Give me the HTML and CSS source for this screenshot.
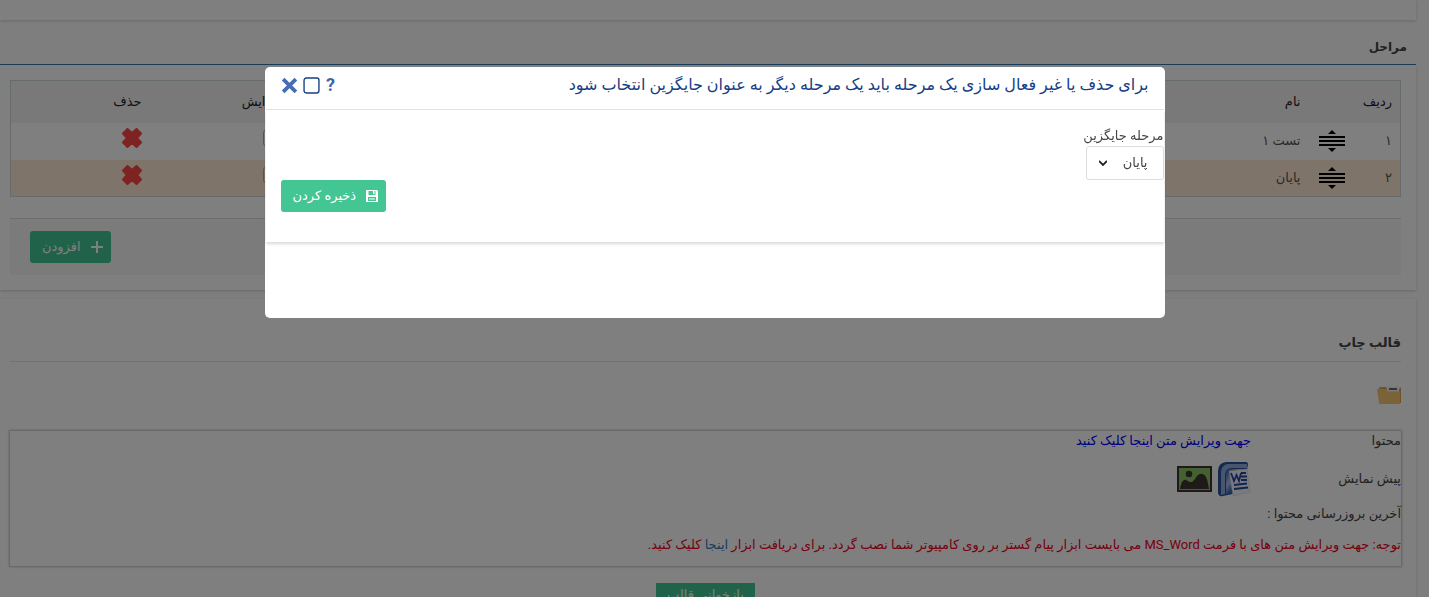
FILE: index.html
```html
<!DOCTYPE html>
<html lang="fa" dir="rtl">
<head>
<meta charset="utf-8">
<title>مراحل</title>
<link rel="stylesheet" href="styles.css">
</head>
<body>
<svg class="sprite" aria-hidden="true">
  <symbol id="drag" viewBox="0 0 26 24"><path d="M13 1l4 4H9zM13 23l4-4H9zM0 7h26v2H0zM0 11h26v2H0zM0 15h26v2H0z"/></symbol>
  <symbol id="remove" viewBox="0 0 20 20"><path d="M5.500 1 10 5 14.500 1 19 5.500 15 10 19 14.500 14.500 19 10 15 5.500 19 1 14.500 5 10 1 5.500z" stroke="#ff4545" stroke-width="2" stroke-linejoin="round"/></symbol>
  <symbol id="edit" viewBox="0 0 20 20"><path d="M13 2.500H2.500a2 2 0 0 0-2 2v11a2 2 0 0 0 2 2h11a2 2 0 0 0 2-2V10M7 12l1-4 8-7 3 3-8 7z" fill="none" stroke="#aaa"/></symbol>
</svg>
<main class="page">
  <section class="card card-top"></section>
  <h2 class="section-title">مراحل</h2>
  <section class="card stages">
    <table class="grid">
      <colgroup><col class="c-num"><col class="c-drag"><col><col class="c-edit"><col class="c-remove"></colgroup>
      <thead><tr><th>ردیف</th><th></th><th>نام</th><th>ویرایش</th><th>حذف</th></tr></thead>
      <tbody>
        <tr><td>۱</td><td><svg class="drag"><use href="#drag"/></svg></td><td>تست ۱</td>
          <td><button class="icon-btn" aria-label="ویرایش"><svg><use href="#edit"/></svg></button></td>
          <td><button class="icon-btn remove" aria-label="حذف"><svg><use href="#remove"/></svg></button></td></tr>
        <tr class="alt"><td>۲</td><td><svg class="drag"><use href="#drag"/></svg></td><td>پایان</td>
          <td><button class="icon-btn" aria-label="ویرایش"><svg><use href="#edit"/></svg></button></td>
          <td><button class="icon-btn remove" aria-label="حذف"><svg><use href="#remove"/></svg></button></td></tr>
      </tbody>
    </table>
    <div class="actions">
      <button class="btn"><svg class="plus" viewBox="0 0 12 12"><path d="M6 0v12M0 6h12" stroke="currentColor" stroke-width="2"/></svg>افزودن</button>
    </div>
  </section>
  <section class="card template">
    <h2 class="card-title">قالب چاپ</h2>
    <button class="folder" aria-label="پوشه"><svg viewBox="0 0 24 18"><path d="M2 2 3 1h6l1 2h12l2-2v16H3z" fill="#e8a04c"/><path d="M10 0h12v6H10z" fill="#f4f4f6"/><path d="M12 2h8v2h-8z" fill="#667"/><path d="M0 3h9l2 2.500h12V17a1 1 0 0 1-1 1H3a1 1 0 0 1-1-1z" fill="#f5c672"/></svg></button>
    <div class="details">
      <div class="row row-first"><span class="label">محتوا</span><a class="edit-link" href="#">جهت ویرایش متن اینجا کلیک کنید</a></div>
      <div class="row row-preview"><span class="label">پیش نمایش</span>
        <span class="previews">
          <svg class="word" viewBox="0 0 34 36"><defs><linearGradient id="wg" x1="0" y1="0" x2="1" y2="1"><stop offset="0" stop-color="#2857a8"/><stop offset=".35" stop-color="#a9c2ea"/><stop offset=".55" stop-color="#3d68b5"/><stop offset="1" stop-color="#214b98"/></linearGradient></defs>
            <path d="M9 1h20q2 0 2 3l-6 27-19 4q-5 1-5-4V10q0-8 8-9z" fill="#2a529c"/><path d="M10 3h20v4H14q-6 1-6 7v19l-4 1V11q0-6 6-8z" fill="#8eaada"/><path d="M12 8h17v22l-20 3V13q0-4 3-5z" fill="url(#wg)"/>
            <path d="M12 10l18-2 3 23-17 4z" fill="#f3f5fb" stroke="#c9cedb" stroke-width=".5"/><path d="M14 12l3 8 2.500-6 2.500 6 2-8" fill="none" stroke="#2346a0" stroke-width="1.800"/><path d="M24 12h5M24 15.500h6M24 19h6M17 24l13-1.500M17 28l14-1.500" stroke="#2346a0" stroke-width="1.800"/></svg>
          <svg class="picture" viewBox="0 0 35 26"><path d="M0 0h35v26H0z" fill="#3c3430"/><path d="M2 2h31v22H2z" fill="#8ac265"/><path d="M3 23c1-6 3-10 6-9 4 2 5 4 9-1 3-6 8-7 11-2 2 4 2 8 3 12z" fill="#3c3430"/><circle cx="12" cy="8" r="3.300" fill="#3c3430"/></svg>
        </span></div>
      <div class="row row-date"><span>آخرین بروزرسانی محتوا :</span></div>
      <p class="row notice"><span>توجه: جهت ویرایش متن های با فرمت MS_Word می بایست ابزار پیام گستر بر روی کامپیوتر شما نصب گردد. برای دریافت ابزار <a href="#">اینجا</a> کلیک کنید.</span></p>
    </div>
    <button class="btn reload">بازخوانی قالب</button>
  </section>
</main>
<div class="overlay">
  <div class="modal" role="dialog" aria-labelledby="dlg-title">
    <header class="modal-head">
      <h1 id="dlg-title">برای حذف یا غیر فعال سازی یک مرحله باید یک مرحله دیگر به عنوان جایگزین انتخاب شود</h1>
      <div class="tools">
        <button class="tool help" aria-label="راهنما">?</button>
        <button class="tool" aria-label="بزرگ کردن"><svg viewBox="0 0 16 16"><rect x="1" y="1" width="14" height="14" rx="2" fill="none" stroke="currentColor" stroke-width="1.300"/></svg></button>
        <button class="tool close" aria-label="بستن"><svg viewBox="0 0 16 16"><path d="M2 2l12 12M14 2L2 14" stroke="currentColor" stroke-width="3.500"/></svg></button>
      </div>
    </header>
    <form class="modal-body">
      <label for="alt">مرحله جایگزین</label>
      <div class="select"><select id="alt"><option>پایان</option></select><svg viewBox="0 0 8 6"><path d="M0 1l4 4 4-4" fill="none" stroke="#222" stroke-width="1.800"/></svg></div>
      <div class="submit"><button type="button" class="btn save-btn"><svg class="save" viewBox="0 0 12 12"><path fill-rule="evenodd" fill="currentColor" d="M0 0h11l1 1v11H0zM2.500 1v4h7V1zM2 7v4h8V7z"/><path d="M7 1h1.500v3H7zM3 8.500h6v1H3z" fill="currentColor"/></svg>ذخیره کردن</button></div>
    </form>
  </div>
</div>
</body>
</html>
```

FILE: styles.css
```css
* { box-sizing: border-box; }
body { margin: 0; height: 100vh; overflow: hidden; background: #fdfdfd; color: #444; font: 13px/20px Roboto, "DejaVu Sans", sans-serif; }
button, select { font: inherit; color: inherit; margin: 0; padding: 0; border: 0; background: none; }
h1, h2, p { margin: 0; }
a { color: #337ab7; text-decoration: none; }
svg { display: block; }
.sprite { position: absolute; width: 0; height: 0; }
.page { height: calc(100vh - 1px); overflow: hidden; padding-right: 13px; }
.card { background: #fff; box-shadow: 0 1px 3px rgba(0, 0, 0, .18); }
.card-top { height: 20px; }
.section-title { margin-top: 17px; padding: 0 9px 7px; border-bottom: 1px solid #337ab7; font-size: 12px; line-height: 20px; }
.stages { padding: 15px 15px 15px 10px; }
.grid { width: 100%; table-layout: fixed; border-collapse: collapse; border: 1px solid #ccd6dd; }
.c-num { width: 48px; }
.c-drag { width: 44px; }
.c-edit { width: 141px; }
.c-remove { width: 139px; }
.grid th, .grid td { padding: 0 8px; text-align: right; font-weight: 400; }
.grid th { height: 42px; background: #f2f2f2; color: #222; }
.grid td { height: 37px; color: #555; }
.grid .alt { background: #ffe8d2; }
.drag { width: 26px; height: 24px; fill: #000; }
.icon-btn { display: block; margin-bottom: 6px; }
.icon-btn svg { width: 20px; height: 20px; }
.remove { fill: #ff4545; }
.actions { display: flex; justify-content: flex-end; margin-top: 21px; padding: 12px 20px; background: #f6f6f6; border-top: 1px solid #ddd; }
.btn { display: flex; align-items: center; height: 32px; padding: 0 8px 0 12px; gap: 10px; border-radius: 3px; background: #43c594; color: #fff; font-weight: 400; }
.plus { width: 12px; height: 12px; }
.save { width: 12px; height: 12px; }
.template { margin-top: 9px; padding: 34px 15px 0 10px; height: 400px; }
.card-title { padding-bottom: 8px; border-bottom: 1px solid #e5e5e5; font-size: 13px; line-height: 20px; }
.folder { display: block; margin-top: 24px; }
.folder svg { width: 24px; height: 18px; }
.details { margin-top: 27px; height: 135px; box-shadow: 0 0 2px 1px rgba(0, 0, 0, .25); }
.row { display: flex; align-items: center; }
.row-first { height: 20px; }
.row-preview { height: 54px; padding-top: 2px; }
.row-date { height: 18px; }
.label { width: 150px; }
.edit-link { color: #00f; }
.previews { display: flex; align-items: center; gap: 5px; }
.word { width: 34px; height: 36px; }
.picture { width: 35px; height: 26px; }
.notice { margin-top: 12px; color: #f00020; }
.reload { margin: 17px auto 0; padding: 0 11px; border-radius: 0; align-items: flex-start; line-height: 24px; }
.overlay { position: fixed; inset: 0; bottom: 1px; padding-top: 67px; background: rgba(0, 0, 0, .5); display: flex; justify-content: center; align-items: flex-start; }
.modal { width: 63%; max-width: 900px; min-height: 251px; padding: 0 1px; background: #fff; border-radius: 5px; }
.modal-head { display: flex; justify-content: space-between; align-items: center; height: 43px; padding: 0 15px 6px; border-bottom: 1px solid #e5e5e5; color: #164085; }
.modal-head h1 { font-size: 16px; line-height: 24px; font-weight: 400; }
.tools { display: flex; align-items: center; gap: 5px; }
.tool svg { width: 17px; height: 17px; }
.help { width: 12px; font-size: 18px; font-weight: 700; color: #3f63ab; }
.close { color: #466db3; }
.modal-body { padding: 16px 0 30px; box-shadow: 0 2px 3px rgba(0, 0, 0, .15); }
.modal-body label { display: block; }
.select { display: grid; width: 78px; height: 34px; align-items: center; }
.select select, .select svg { grid-area: 1 / 1; }
.select select { appearance: none; width: 100%; height: 34px; padding: 0 15px; border: 1px solid #ddd; border-radius: 3px; background: #fff; }
.select svg { width: 8px; height: 6px; justify-self: end; margin-left: 13px; pointer-events: none; }
.submit { display: flex; justify-content: flex-end; padding-left: 15px; }
```
